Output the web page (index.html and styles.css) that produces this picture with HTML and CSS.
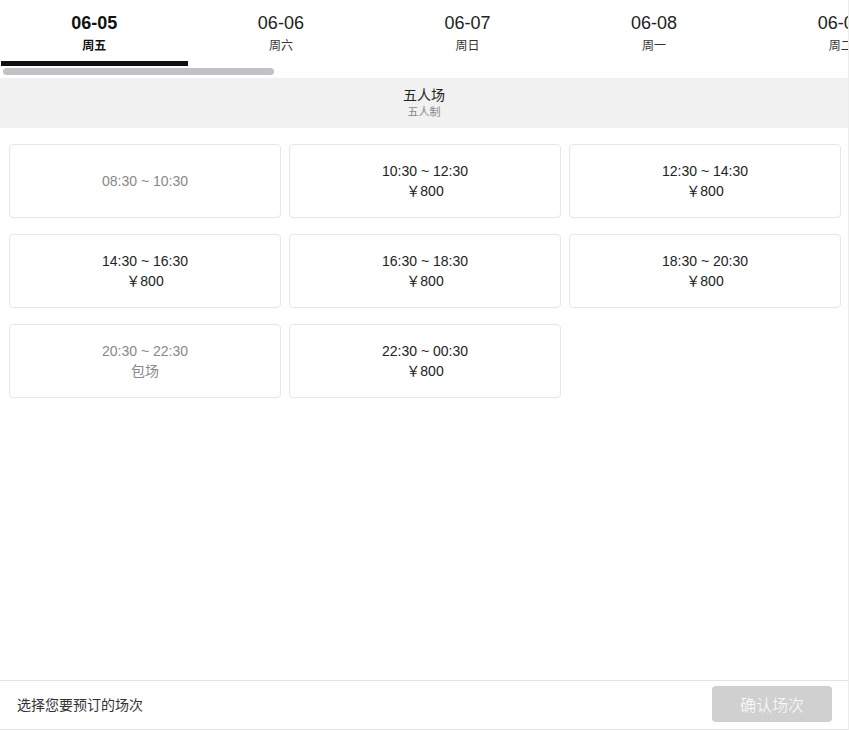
FILE: index.html
```html
<!DOCTYPE html>
<html lang="zh">
<head>
<meta charset="utf-8">
<link rel="stylesheet" href="styles.css">
</head>
<body>
<div class="page">
  <div class="tabs-wrap">
    <div class="tabs">
      <div class="tab active"><div class="date">06-05</div><div class="week">周五</div></div>
      <div class="tab"><div class="date">06-06</div><div class="week">周六</div></div>
      <div class="tab"><div class="date">06-07</div><div class="week">周日</div></div>
      <div class="tab"><div class="date">06-08</div><div class="week">周一</div></div>
      <div class="tab"><div class="date">06-09</div><div class="week">周二</div></div>
    </div>
    <div class="scrollbar"><div class="thumb"></div></div>
  </div>
  <div class="band">
    <div class="band-title">五人场</div>
    <div class="band-sub">五人制</div>
  </div>
  <div class="grid">
    <div class="slot disabled"><div>08:30 ~ 10:30</div></div>
    <div class="slot"><div>10:30 ~ 12:30</div><div>￥800</div></div>
    <div class="slot"><div>12:30 ~ 14:30</div><div>￥800</div></div>
    <div class="slot"><div>14:30 ~ 16:30</div><div>￥800</div></div>
    <div class="slot"><div>16:30 ~ 18:30</div><div>￥800</div></div>
    <div class="slot"><div>18:30 ~ 20:30</div><div>￥800</div></div>
    <div class="slot disabled"><div>20:30 ~ 22:30</div><div>包场</div></div>
    <div class="slot"><div>22:30 ~ 00:30</div><div>￥800</div></div>
  </div>
  <div class="spacer"></div>
  <div class="footer">
    <div class="hint">选择您要预订的场次</div>
    <div class="btn">确认场次</div>
  </div>
</div>
</body>
</html>
```
FILE: styles.css
```css
* { box-sizing: border-box; }
html, body { margin: 0; padding: 0; background: #fff; }
body {
  font-family: "Liberation Sans", Arial, "Noto Sans CJK SC", sans-serif;
  color: #222;
  overflow: hidden;
}
.page {
  width: 849px;
  height: 730px;
  border-right: 1px solid #ececec;
  display: flex;
  flex-direction: column;
  overflow: hidden;
}
.tabs-wrap {
  height: 78px;
  overflow: hidden;
  position: relative;
}
.tabs {
  display: flex;
  padding-left: 1px;
  width: 1000px;
}
.tab {
  flex: 0 0 186.6px;
  height: 66px;
  text-align: center;
  border-bottom: 5px solid transparent;
}
.tab.active { border-bottom-color: #111; }
.date {
  font-size: 18px;
  line-height: 22px;
  padding-top: 12px;
  color: #222;
}
.week {
  font-size: 12px;
  line-height: 16px;
  margin-top: 3px;
  color: #333;
  font-family: "Noto Sans CJK SC", sans-serif;
}
.tab.active .date, .tab.active .week { font-weight: bold; color: #111; }
.scrollbar {
  height: 8px;
  margin-top: 2px;
  padding-left: 3px;
}
.thumb {
  width: 271px;
  height: 7px;
  background: #c2c2c6;
  border-radius: 4px;
}
.band {
  height: 50px;
  background: #f1f1f1;
  text-align: center;
  padding-top: 7px;
}
.band-title {
  font-family: "Noto Sans CJK SC", sans-serif;
  font-size: 14px;
  line-height: 19px;
  color: #222;
}
.band-sub {
  font-family: "Noto Sans CJK SC", sans-serif;
  font-size: 11px;
  line-height: 14px;
  color: #888;
}
.grid {
  display: grid;
  grid-template-columns: repeat(3, 272px);
  column-gap: 8px;
  row-gap: 16px;
  padding: 16px 0 0 9px;
}
.slot {
  height: 74px;
  border: 1px solid #e6e6e6;
  border-radius: 4px;
  display: flex;
  flex-direction: column;
  justify-content: center;
  align-items: center;
  font-size: 14px;
  line-height: 20px;
  color: #222;
}
.slot.disabled { color: #888; }
.spacer { flex: 1; }
.footer {
  height: 50px;
  border-top: 1px solid #e2e2e2;
  border-bottom: 1px solid #e2e2e2;
  display: flex;
  align-items: center;
  justify-content: space-between;
  padding: 0 16px 0 17px;
}
.hint {
  font-family: "Noto Sans CJK SC", sans-serif;
  font-size: 14px;
  color: #333;
  margin-top: -2px;
}
.btn {
  width: 120px;
  height: 36px;
  background: #d0d0d0;
  border-radius: 4px;
  color: #fff;
  font-family: "Noto Sans CJK SC", sans-serif;
  font-weight: 300;
  font-size: 16px;
  display: flex;
  align-items: center;
  justify-content: center;
  margin-top: -2px;
}
```
